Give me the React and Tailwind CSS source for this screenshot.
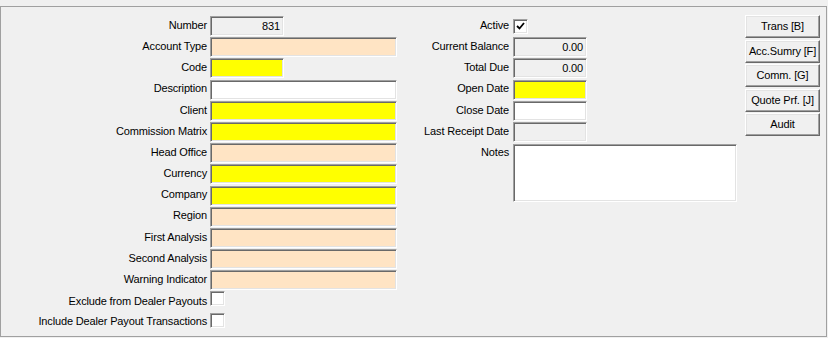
import React from 'react';

const sunken = 'border border-t-[#a0a0a0] border-l-[#a0a0a0] border-b-white border-r-white shadow-[inset_1px_1px_0_#696969,inset_-1px_-1px_0_#e3e3e3]';
const raised = 'border border-t-white border-l-white border-b-[#696969] border-r-[#696969] shadow-[inset_-1px_-1px_0_#a0a0a0,inset_1px_1px_0_#e3e3e3]';

const bgs = {
    grey: 'bg-[#f0f0f0]',
    peach: 'bg-[#ffe4c4]',
    yellow: 'bg-[#ffff00]',
    white: 'bg-white',
};

const leftFields = [
    { label: 'Number', bg: 'grey', w: 'w-[74px]', value: '831' },
    { label: 'Account Type', bg: 'peach' },
    { label: 'Code', bg: 'yellow', w: 'w-[74px]' },
    { label: 'Description', bg: 'white' },
    { label: 'Client', bg: 'yellow' },
    { label: 'Commission Matrix', bg: 'yellow' },
    { label: 'Head Office', bg: 'peach' },
    { label: 'Currency', bg: 'yellow' },
    { label: 'Company', bg: 'yellow' },
    { label: 'Region', bg: 'peach' },
    { label: 'First Analysis', bg: 'peach' },
    { label: 'Second Analysis', bg: 'peach' },
    { label: 'Warning Indicator', bg: 'peach' },
];

const midFields = [
    { label: 'Current Balance', bg: 'grey', value: '0.00' },
    { label: 'Total Due', bg: 'grey', value: '0.00' },
    { label: 'Open Date', bg: 'yellow' },
    { label: 'Close Date', bg: 'white' },
    { label: 'Last Receipt Date', bg: 'grey' },
];

const buttons = ['Trans [B]', 'Acc.Sumry [F]', 'Comm. [G]', 'Quote Prf. [J]', 'Audit'];

const Box = ({ bg, w = 'w-[187px]', value }) => (
    <div className={`${sunken} ${bgs[bg]} ${w} h-[20px] flex items-center justify-end pr-[3px]`}>
        {value}
    </div>
);

const Check = ({ checked }) => (
    <div className={`${sunken} bg-white w-[15px] h-[15px] flex items-center justify-center`}>
        {checked && (
            <svg width="9" height="8" viewBox="0 0 9 8">
                <path d="M1 4 L3.5 6.5 L8 1" fill="none" stroke="#000" strokeWidth="1.8" />
            </svg>
        )}
    </div>
);

const Row = ({ label, labelW, children, align = 'items-center', gap = 'gap-[3px]', lift = 'pb-[2px]' }) => (
    <div className={`flex ${align} ${gap} h-[20px]`}>
        <div className={`${labelW} ${lift} text-right whitespace-nowrap`}>{label}</div>
        {children}
    </div>
);

export default function App() {
    return (
        <div className="w-[828px] h-[338px] bg-[#f0f0f0] pt-[6px] text-[11px] tracking-[-0.15px] text-black" style={{ fontFamily: '"Liberation Sans", Arial, sans-serif' }}>
            <div className="w-[827px] h-[331px] border border-[#a0a0a0] flex pt-[9px]">
                {/* left column */}
                <div className="flex flex-col gap-[1.2px]">
                    {leftFields.map((f) => (
                        <Row key={f.label} label={f.label} labelW="w-[206px]">
                            <Box bg={f.bg} w={f.w} value={f.value} />
                        </Row>
                    ))}
                    <Row label="Exclude from Dealer Payouts" labelW="w-[206px]" align="items-start" lift="pt-[1.5px]">
                        <Check />
                    </Row>
                    <Row label="Include Dealer Payout Transactions" labelW="w-[206px]" align="items-start" lift="pt-[0.5px]">
                        <Check />
                    </Row>
                </div>

                {/* middle column */}
                <div className="flex flex-col gap-[1.2px]">
                    <Row label="Active" labelW="w-[112px]" gap="gap-[4px]" lift="pb-[1px]">
                        <Check checked />
                    </Row>
                    {midFields.map((f) => (
                        <Row key={f.label} label={f.label} labelW="w-[112px]" gap="gap-[4px]">
                            <Box bg={f.bg} w="w-[74px]" value={f.value} />
                        </Row>
                    ))}
                    <div className="flex gap-[4px] mt-[1px]">
                        <div className="w-[112px] text-right">Notes</div>
                        <div className={`${sunken} bg-white w-[224px] h-[58px]`} />
                    </div>
                </div>

                {/* buttons */}
                <div className="flex flex-col gap-[1.5px] ml-[8px] -mt-[1px]">
                    {buttons.map((b) => (
                        <button key={b} className={`${raised} bg-[#f0f0f0] w-[75px] h-[23px] text-[11px] tracking-[-0.15px] flex items-center justify-center`}>
                            {b}
                        </button>
                    ))}
                </div>
            </div>
        </div>
    );
}
